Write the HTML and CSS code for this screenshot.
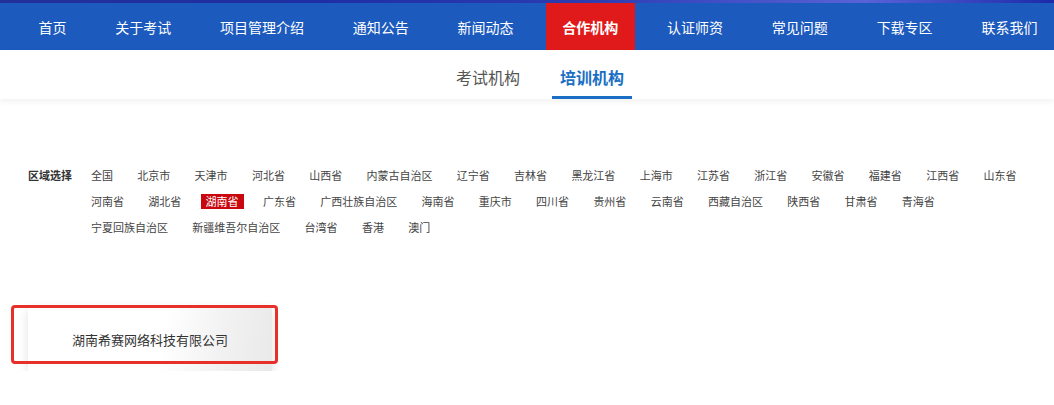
FILE: index.html
```html
<!DOCTYPE html>
<html lang="zh-CN">
<head>
    <meta charset="UTF-8">
    <meta name="viewport" content="width=device-width, initial-scale=1.0">
    <title>合作机构</title>
    <link rel="stylesheet" href="styles.css">
</head>
<body>
    <div class="top-strip"></div>
    <nav class="nav">
        <a href="#">首页</a>
        <a href="#">关于考试</a>
        <a href="#">项目管理介绍</a>
        <a href="#">通知公告</a>
        <a href="#">新闻动态</a>
        <a href="#" class="active">合作机构</a>
        <a href="#">认证师资</a>
        <a href="#">常见问题</a>
        <a href="#">下载专区</a>
        <a href="#">联系我们</a>
    </nav>

    <div class="subnav">
        <a href="#" class="tab">考试机构</a>
        <a href="#" class="tab current">培训机构</a>
    </div>

    <div class="filter">
        <div class="filter-label">区域选择</div>
        <div class="area-list">
            <span>全国</span><span>北京市</span><span>天津市</span><span>河北省</span><span>山西省</span>
            <span>内蒙古自治区</span><span>辽宁省</span><span>吉林省</span><span>黑龙江省</span><span>上海市</span>
            <span>江苏省</span><span>浙江省</span><span>安徽省</span><span>福建省</span><span>江西省</span>
            <span>山东省</span><span>河南省</span><span>湖北省</span><span class="selected">湖南省</span><span>广东省</span>
            <span>广西壮族自治区</span><span>海南省</span><span>重庆市</span><span>四川省</span><span>贵州省</span>
            <span>云南省</span><span>西藏自治区</span><span>陕西省</span><span>甘肃省</span><span>青海省</span>
            <span>宁夏回族自治区</span><span>新疆维吾尔自治区</span><span>台湾省</span><span>香港</span><span>澳门</span>
        </div>
    </div>

    <div class="org-list">
        <div class="org-card">
            湖南希赛网络科技有限公司
            <div class="highlight"></div>
        </div>
    </div>
</body>
</html>
```

FILE: styles.css
```css
body {
    margin: 0;
    background: #fff;
    font-family: "Noto Sans CJK SC", "Liberation Sans", sans-serif;
    color: #333;
}

.top-strip {
    height: 3px;
    background: linear-gradient(90deg, #23309a 0%, #1f2ea3 30%, #2b3bb0 55%, #5a62d8 82%, #1c2aa8 100%);
}

.nav {
    height: 47px;
    background: #1c5abd;
    display: flex;
    justify-content: space-between;
    padding: 0 0 0 22px;
}
.nav a {
    display: flex;
    align-items: center;
    padding: 0 16.5px;
    color: #fff;
    font-size: 14px;
    text-decoration: none;
}
.nav a.active {
    background: #e01a1a;
    font-weight: bold;
}

.subnav {
    height: 49px;
    display: flex;
    justify-content: center;
    gap: 24px;
    padding-left: 26px;
    box-shadow: 0 3px 5px rgba(0, 0, 0, 0.05);
}
.tab {
    box-sizing: border-box;
    height: 49px;
    padding: 8px 8px 0;
    line-height: 38px;
    font-size: 16px;
    color: #555;
    text-decoration: none;
    border-bottom: 3px solid transparent;
}
.tab.current {
    color: #1a6fc4;
    font-weight: bold;
    border-bottom-color: #1a6fc4;
}

.filter {
    display: flex;
    margin-top: 69px;
    padding-left: 28px;
    font-size: 11px;
    line-height: 15px;
}
.filter-label {
    width: 58px;
    flex-shrink: 0;
    font-weight: bold;
    color: #333;
}
.area-list {
    width: 950px;
    display: flex;
    flex-wrap: wrap;
    gap: 11px 14.3px;
}
.area-list span {
    padding: 0 5px;
    color: #444;
}
.area-list span.selected {
    background: #c8070e;
    color: #fff;
}

.org-list {
    margin-top: 72px;
    padding-left: 28px;
}
.org-card {
    position: relative;
    width: 244px;
    height: 64px;
    display: flex;
    align-items: center;
    justify-content: center;
    font-size: 13px;
    color: #333;
    background: linear-gradient(100deg, #fff 55%, #f2f2f2 78%, #e9e9e9 100%);
    box-shadow: 0 3px 10px rgba(0, 0, 0, 0.12);
}
.highlight {
    position: absolute;
    left: -17px;
    top: -2px;
    width: 267px;
    height: 59px;
    box-sizing: border-box;
    border: 3px solid #e8302a;
    border-radius: 4px;
}
```
